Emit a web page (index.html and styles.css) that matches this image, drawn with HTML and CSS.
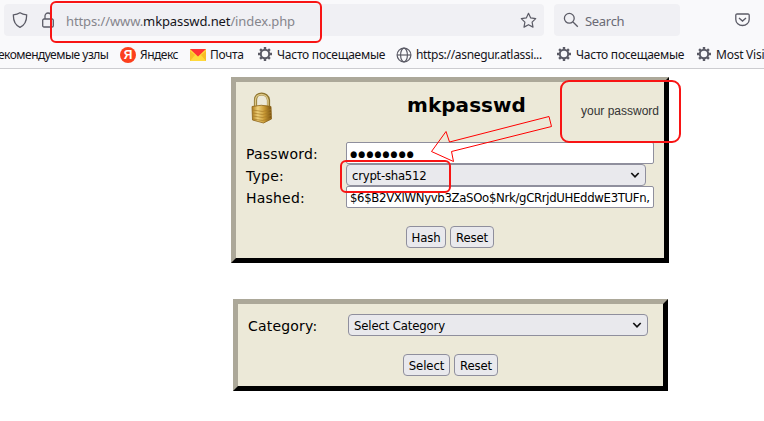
FILE: index.html
```html
<!DOCTYPE html>
<html lang="en">
<head>
<meta charset="utf-8">
<title>mkpasswd</title>
<link rel="stylesheet" href="styles.css">
</head>
<body>
<svg class="defs" width="0" height="0">
  <symbol id="gear" viewBox="0 0 16 16">
    <g stroke="#5b5b66" fill="none"><circle cx="8" cy="8" r="4.2" stroke-width="2"/>
    <path stroke-width="2.400" d="M8 1v3M8 12v3M1 8h3M12 8h3M3.1 3.1l2 2M10.9 10.9l2 2M3.1 12.9l2-2M10.9 5.1l2-2"/></g>
  </symbol>
  <symbol id="chevron" viewBox="0 0 10 8"><path d="M1.3 2l3.7 3.8L8.700 2" fill="none" stroke="#111" stroke-width="1.7"/></symbol>
</svg>
<header class="chrome">
  <div class="navbar">
    <div class="urlbar">
      <svg class="shield" width="16" height="16" viewBox="0 0 16 16"><path d="M8 .8C6 2 3.800 2.600 1.400 2.900C1.200 8.500 3 13 8 15.300C13 13 14.800 8.500 14.600 2.900C12.200 2.600 10 2 8 .8z" fill="none" stroke="#5b5b66" stroke-width="1.300"/></svg>
      <svg class="padlock" width="12" height="16" viewBox="0 0 12 16"><path d="M3 7V4a3 3 0 0 1 6 0v3M2 7h8a1.300 1.300 0 0 1 1.300 1.300v5.400A1.300 1.300 0 0 1 10 15H2A1.300 1.300 0 0 1 .7 13.700V8.300A1.300 1.300 0 0 1 2 7z" fill="none" stroke="#5b5b66" stroke-width="1.300"/></svg>
      <span class="url">https://www.<b>mkpasswd.net</b>/index.php</span>
      <svg class="star" width="17" height="17" viewBox="0 0 17 17"><path d="M8.500 1.300l2.200 4.600 5 .7-3.600 3.500.9 5-4.500-2.400L4 15.100l.9-5L1.300 6.600l5-.7z" fill="none" stroke="#5b5b66" stroke-width="1.200" stroke-linejoin="round"/></svg>
    </div>
    <div class="search">
      <svg width="16" height="16" viewBox="0 0 16 16"><circle cx="6.300" cy="6.300" r="4.900" fill="none" stroke="#5b5b66" stroke-width="1.300"/><path d="M10 10l4.800 4.800" stroke="#5b5b66" stroke-width="1.300"/></svg>
      <span>Search</span>
    </div>
    <svg class="pocket" width="15" height="14" viewBox="0 0 15 14"><path d="M2.200 1h10.600A1.300 1.300 0 0 1 14.200 2.300V6.500a6.700 6 0 0 1-13.400 0V2.300A1.300 1.300 0 0 1 2.200 1z" fill="none" stroke="#5b5b66" stroke-width="1.300"/><path d="M4 5l3.500 3L11 5" fill="none" stroke="#5b5b66" stroke-width="1.400"/></svg>
  </div>
  <nav class="bookmarks">
    <span class="mark first"><span class="cyr-a">екомендуемые узлы</span></span>
    <span class="mark yandex"><i class="ya">Я</i><span>Яндекс</span></span>
    <span class="mark mail"><svg width="16" height="12" viewBox="0 0 16 12"><path fill="#ffd93b" d="M0 0h16v12H0z"/><path fill="#f8bd27" d="M0 12V2l5 4zM16 12V2l-5 4z"/><path fill="#f33" d="M0 0h16L8 7.500z"/></svg><span>Почта</span></span>
    <span class="mark often"><svg width="16" height="16"><use href="#gear"/></svg><span>Часто посещаемые</span></span>
    <span class="mark jira"><svg width="16" height="16" viewBox="0 0 16 16"><g fill="none" stroke="#5b5b66" stroke-width="1.200"><circle cx="8" cy="8" r="6.900"/><ellipse cx="8" cy="8" rx="3.400" ry="6.900"/><path d="M1 8h14"/></g></svg><span>https://asnegur.atlassi...</span></span>
    <span class="mark often"><svg width="16" height="16"><use href="#gear"/></svg><span>Часто посещаемые</span></span>
    <span class="mark most"><svg width="16" height="16"><use href="#gear"/></svg><span>Most Visi</span></span>
  </nav>
</header>
<main>
  <section class="panel hasher">
    <div class="heading">
      <svg class="gold" width="24" height="32" viewBox="0 0 24 32">
        <defs><linearGradient id="brass"><stop offset="0" stop-color="#ad7c1d"/><stop offset=".3" stop-color="#f0d17a"/><stop offset=".65" stop-color="#c69732"/><stop offset="1" stop-color="#76500e"/></linearGradient></defs>
        <path d="M5.500 15V8c0-8 12-8 13 0v7" fill="none" stroke="#8d732c" stroke-width="3.200"/>
        <path d="M5.500 15V8c0-7.500 11.500-7.500 12.500 0v7" fill="none" stroke="#dcc888" stroke-width="1.500"/>
        <path d="M2 14.500Q11 12 21 14.500l.5 12.500-8 4L2.500 28z" fill="url(#brass)" stroke="#8d641a" stroke-width=".8"/>
        <path d="M2.500 18l10 1.500 8.500-2M2.500 21l10 1.500 8.500-2M2.500 24l10 1.500 8.500-2M2.500 27l10 1.500 8.500-2" fill="none" stroke="#a87b28" stroke-width=".7"/>
      </svg>
      <h1>mkpasswd</h1>
    </div>
    <div class="row"><label>Password:</label><div class="field"><span class="dots">●●●●●●●●</span></div></div>
    <div class="row"><label>Type:</label><div class="select"><span class="t-type">crypt-sha512</span><svg width="10" height="8"><use href="#chevron"/></svg></div></div>
    <div class="row"><label>Hashed:</label><div class="field"><span class="hash">$6$B2VXlWNyvb3ZaSOo$Nrk/gCRrjdUHEddwE3TUFn,</span></div></div>
    <div class="buttons"><button class="b-hash">Hash</button><button class="b-reset">Reset</button></div>
  </section>
  <section class="panel category">
    <div class="row"><label>Category:</label><div class="select"><span class="t-cat">Select Category</span><svg width="10" height="8"><use href="#chevron"/></svg></div></div>
    <div class="buttons"><button class="b-select">Select</button><button class="b-reset">Reset</button></div>
  </section>
</main>
<div class="callout c-url"></div>
<div class="callout c-type"></div>
<div class="callout c-pass"><span>your password</span></div>
<svg class="arrow" width="764" height="421" viewBox="0 0 764 421"><path d="M431.500 151.500L446 131.500L449.500 142L549 116.500L551.500 126.500L451.500 151.500L453.500 161.500Z" fill="none" stroke="#f00" stroke-width="1"/></svg>
</body>
</html>
```
FILE: styles.css
```css
* { box-sizing: border-box; }
body { margin: 0; width: 764px; height: 421px; overflow: hidden; background: #fff; color: #000; font-family: "DejaVu Sans", sans-serif; position: relative; }
svg { display: block; flex: none; }
.defs { position: absolute; }
.chrome { height: 69px; background: #f9f9fb; border-bottom: 1px solid #ccccd0; overflow: hidden; font-family: "Noto Sans", sans-serif; }
.navbar { display: flex; height: 40px; padding: 4px 0 4px 4px; }
.urlbar { display: flex; align-items: center; width: 540px; height: 32px; padding: 0 7px 0 8px; background: #f0f0f4; border-radius: 4px; }
.padlock { margin-left: 14px; }
.url { margin: 2px auto 0 12px; font-size: 13px; letter-spacing: -.11px; color: #85858c; white-space: nowrap; }
.url b { font-weight: 400; color: #15141a; }
.search { display: flex; align-items: center; gap: 6px; width: 126px; height: 32px; margin-left: 10px; padding-left: 9px; background: #f0f0f4; border-radius: 4px; font-size: 13px; letter-spacing: -.3px; color: #6a6a75; }
.search span { margin-top: 2px; }
.pocket { margin: 9px 0 0 55px; }
.bookmarks { display: flex; height: 29px; align-items: center; font-size: 12px; letter-spacing: -.28px; color: #15141a; }
.mark { display: flex; align-items: center; gap: 4px; flex: none; white-space: nowrap; }
.first { width: 120px; letter-spacing: -.5px; }
.cyr-a { margin-left: -2px; }
.yandex { width: 70px; letter-spacing: -.5px; }
.mail { width: 67px; }
.often { width: 140px; }
.often, .most { letter-spacing: -.25px; }
.mail + .often { width: 139px; }
.jira { width: 160px; letter-spacing: -.32px; }
.mark.often svg, .mark.most svg { margin-top: -1px; }
.ya { width: 16px; height: 16px; border-radius: 50%; background: #fc3f1d; color: #fff; font: bold 12px/16px "Liberation Sans", sans-serif; text-align: center; letter-spacing: 0; }
.panel { border: 5px solid; border-color: #aca899 #000 #000 #aca899; background: #ece9d8; }
.hasher { width: 438px; height: 186px; margin: 8px 0 0 231px; padding: 0 10px; }
.category { width: 435px; height: 92px; margin: 36px 0 0 233px; padding: 10px 10px 0; }
.heading { display: flex; height: 60px; padding-top: 10px; }
.gold { margin-left: 4px; }
h1 { margin: 1px 0 0 133px; font-size: 20px; line-height: 24px; letter-spacing: .05px; }
.row { display: flex; height: 22px; }
label { width: 100px; font-size: 14px; line-height: 25px; letter-spacing: .2px; }
.field, .select { height: 22px; border: 1px solid #8f8f9d; border-radius: 3px; background: #fff; font: 13px/21px "DejaVu Sans Condensed", sans-serif; white-space: nowrap; overflow: hidden; }
.field { width: 308px; padding: 0 3px; border-radius: 2px; }
.field span { display: block; }
.select { display: flex; align-items: center; justify-content: space-between; width: 300px; padding: 0 5px; background: #e9e9ed; border-radius: 4px; }
.field .dots { font-size: 9px; letter-spacing: 1px; line-height: 22px; }
.hash { letter-spacing: -.32px; }
.t-type { letter-spacing: -.25px; }
.t-cat { letter-spacing: -.15px; }
.buttons { display: flex; justify-content: center; gap: 4px; margin-top: 18px; }
button { height: 22px; padding: 0; border: 1px solid #8f8f9d; border-radius: 4px; background: #e9e9ed; color: #000; font: 13px/21px "DejaVu Sans Condensed", sans-serif; letter-spacing: -.1px; }
.b-hash { width: 40px; }
.b-reset { width: 44px; }
.b-select { width: 47px; }
.callout { position: absolute; border: 2px solid #f81414; border-radius: 6px; }
.c-url { left: 50px; top: 1px; width: 272px; height: 42px; }
.c-type { left: 340px; top: 160px; width: 111px; height: 33px; }
.c-pass { left: 560px; top: 80px; width: 121px; height: 63px; border-radius: 9px; padding: 20px 0 0 19px; font: 12px/18px "Liberation Sans", sans-serif; color: #333; white-space: nowrap; }
.arrow { position: absolute; left: 0; top: 0; }
```
